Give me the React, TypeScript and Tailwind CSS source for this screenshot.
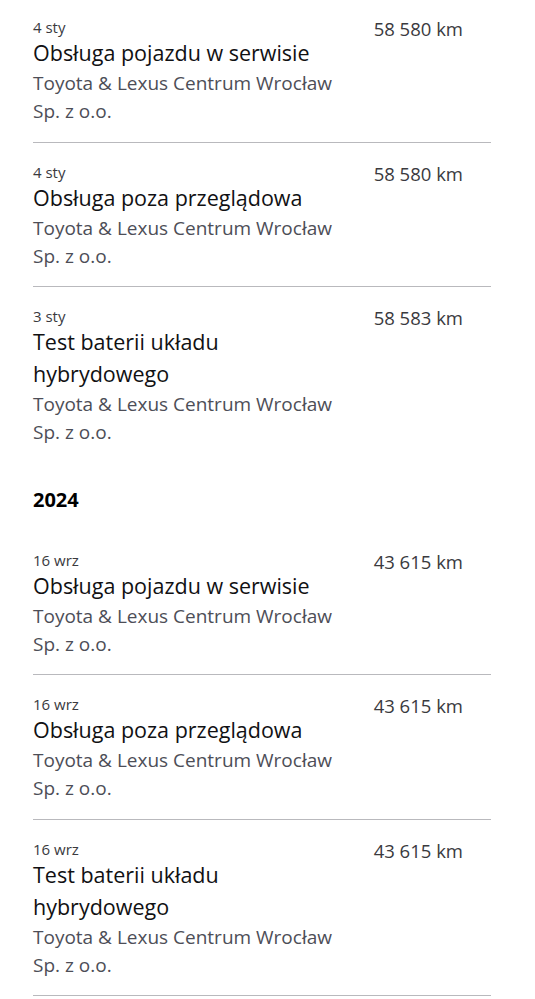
import React from "react";

type Item = { date: string; title: string[]; km: string };

const company = ["Toyota & Lexus Centrum Wrocław", "Sp. z o.o."];

const sections: { year?: string; items: Item[] }[] = [
  {
    items: [
      { date: "4 sty", title: ["Obsługa pojazdu w serwisie"], km: "58 580 km" },
      { date: "4 sty", title: ["Obsługa poza przeglądowa"], km: "58 580 km" },
      { date: "3 sty", title: ["Test baterii układu", "hybrydowego"], km: "58 583 km" },
    ],
  },
  {
    year: "2024",
    items: [
      { date: "16 wrz", title: ["Obsługa pojazdu w serwisie"], km: "43 615 km" },
      { date: "16 wrz", title: ["Obsługa poza przeglądowa"], km: "43 615 km" },
      { date: "16 wrz", title: ["Test baterii układu", "hybrydowego"], km: "43 615 km" },
    ],
  },
];

function Row({ item, border, first }: { item: Item; border: boolean; first: boolean }) {
  return (
    <div
      className={`flex justify-between pb-[16.5px] ${first ? "pt-[17px]" : "pt-[19px]"} ${
        border ? "border-b-[1.5px] border-[#b9b9bd]" : ""
      }`}
    >
      <div className="flex flex-col">
        <div className="text-[15px] leading-[20px] text-[#3a3a3e]">{item.date}</div>
        {item.title.map((t) => (
          <div key={t} className="text-[21.5px] leading-[32px] text-[#111113]">
            {t}
          </div>
        ))}
        {company.map((c) => (
          <div key={c} className="text-[19px] leading-[28px] text-[#4d4e57]">
            {c}
          </div>
        ))}
      </div>
      <div className="pr-[28px] pt-[2px] text-[18.5px] leading-[20px] text-[#3a3a3e]">{item.km}</div>
    </div>
  );
}

export default function App() {
  return (
    <div
      className="min-h-[999px] w-[535px] bg-white pl-[33px] pr-[44px]"
      style={{ fontFamily: "'Open Sans', 'Noto Sans', sans-serif" }}
    >
      {sections.map((s, si) => (
        <div key={si}>
          {s.year && (
            <div className="pt-[23px] pb-[17px] text-[20px] font-bold leading-[28px] text-black">
              {s.year}
            </div>
          )}
          {s.items.map((it, i) => (
            <Row
              key={i}
              item={it}
              first={si === 0 && i === 0}
              border={si === 1 || i < s.items.length - 1}
            />
          ))}
        </div>
      ))}
    </div>
  );
}
